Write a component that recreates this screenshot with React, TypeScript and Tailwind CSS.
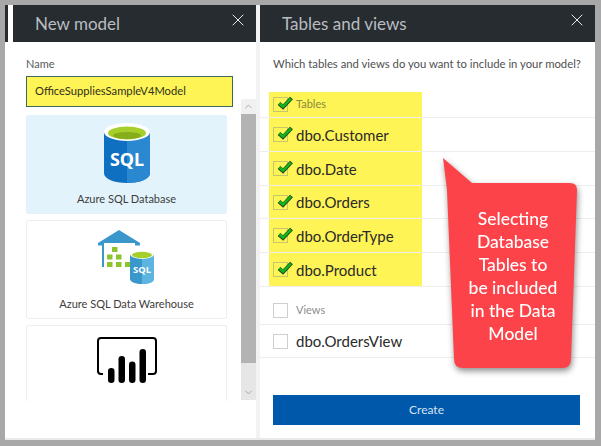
import { X, ChevronUp, ChevronDown } from "lucide-react"

const font = { fontFamily: 'Lato, "Noto Sans", sans-serif' }

function Check() {
  return (
    <svg viewBox="0 0 18 16" className="absolute left-[2px] top-[-3px] w-[18px] h-[16px]">
      <path d="M3 8.5 L7 12 L15.5 3" fill="none" stroke="#1f4a1f" strokeWidth="4" />
      <path d="M3.5 8.5 L7 11.5 L15 3.5" fill="none" stroke="#12b81c" strokeWidth="2.4" />
    </svg>
  )
}

function Box({ checked }: { checked?: boolean }) {
  return (
    <span
      className={`relative shrink-0 w-[15px] h-[15px] border ${checked ? "border-[#c9c66a]" : "border-[#cfcfcf] bg-white"}`}
    >
      {checked && <Check />}
    </span>
  )
}

function Header({ title, close }: { title: string; close: string }) {
  return (
    <div className="flex items-center justify-between h-[37px] bg-[#272c30] shrink-0">
      <span className="text-[17px] text-[#b9bdc0] pl-[22px] leading-none">{title}</span>
      <X className={`${close} w-[20px] h-[20px] text-[#e8e8e8] mb-[7px]`} strokeWidth={1.2} />
    </div>
  )
}

function Row({ label, checked, small, className }: { label: string; checked?: boolean; small?: boolean; className: string }) {
  return (
    <div className={`flex items-center pl-[13px] border-b border-[#eeeeee] ${className}`}>
      <Box checked={checked} />
      <span
        className={
          small
            ? `ml-[8px] text-[11px] ${checked ? "text-[#8a8840]" : "text-[#8d8d8d]"}`
            : "ml-[8px] pt-[1px] text-[15px] text-[#2a2a2a]"
        }
      >
        {label}
      </span>
    </div>
  )
}

function SqlDb() {
  return (
    <svg viewBox="0 0 46 60" className="w-[46px] h-[60px]">
      <path d="M0 9 V50 C0 56 10 60 23 60 C36 60 46 56 46 50 V9 Z" fill="#0f6fc0" />
      <path d="M23 18 V60 C36 60 46 56 46 50 V9 Z" fill="#2a88d0" />
      <ellipse cx="23" cy="9" rx="23" ry="9" fill="#ffffff" />
      <ellipse cx="23" cy="10" rx="19" ry="6.5" fill="#a7cf2c" />
      <ellipse cx="23" cy="12.5" rx="14" ry="3.5" fill="#86ad1a" />
      <text x="23" y="43" textAnchor="middle" fontSize="18" fontWeight="700" fill="#ffffff" fontFamily="Noto Sans, sans-serif">
        SQL
      </text>
    </svg>
  )
}

function Warehouse() {
  return (
    <svg viewBox="0 0 58 54" className="w-[58px] h-[54px]">
      <path d="M0 13 L21 0 L42 13 V15.5 H37 V13 H6 V37 H4 V15.5 H0 Z" fill="#3a97cb" />
      <g fill="#8cc52b">
        <rect x="14" y="17" width="5.5" height="5" />
        <rect x="9" y="24.5" width="5.5" height="5" />
        <rect x="18" y="24.5" width="5.5" height="5" />
        <rect x="9" y="32" width="5.5" height="5" />
        <rect x="18" y="32" width="5.5" height="5" />
        <rect x="27" y="32" width="5.5" height="5" />
      </g>
      <path d="M32 24 V49 C32 52 38 54 44 54 C50 54 56 52 56 49 V24 Z" fill="#3a97cb" />
      <path d="M44 28 V54 C50 54 56 52 56 49 V24 Z" fill="#5cb5e0" />
      <ellipse cx="44" cy="24" rx="12" ry="5" fill="#ffffff" />
      <ellipse cx="44" cy="25" rx="10" ry="3.3" fill="#a7cf2c" />
      <text x="44" y="43" textAnchor="middle" fontSize="9.5" fontWeight="700" fill="#ffffff" fontFamily="Noto Sans, sans-serif">
        SQL
      </text>
    </svg>
  )
}

function PowerBi() {
  return (
    <svg viewBox="0 0 60 46" className="w-[60px] h-[46px]">
      <path d="M6 37 H4 Q1 37 1 34 V4 Q1 1 4 1 H56 Q59 1 59 4 V34 Q59 37 56 37 H51" fill="none" stroke="#000" strokeWidth="2" />
      <rect x="11" y="31" width="6.5" height="15" rx="3.2" fill="#000" />
      <rect x="21.5" y="19" width="6.5" height="27" rx="3.2" fill="#000" />
      <rect x="32" y="24.5" width="6.5" height="21.5" rx="3.2" fill="#000" />
      <rect x="42.5" y="12" width="6.5" height="34" rx="3.2" fill="#000" />
    </svg>
  )
}

function Callout() {
  return (
    <div className="absolute left-[183px] top-[153px] w-[140px] h-[212px] drop-shadow-[1px_3px_3px_rgba(0,0,0,0.45)]">
      <svg viewBox="0 0 140 212" className="absolute inset-0 w-full h-full">
        <path
          d="M0 0 L29 25 H127 Q134 25 134 32 L128 201 Q128 210 119 210 H20 Q11 210 11 201 L4 32 Z"
          fill="#fc4349"
        />
      </svg>
      <div className="relative pt-[49px] pl-[2px] w-[138px] text-center text-white text-[17.5px] leading-[23px] font-medium">
        <div>Selecting</div>
        <div>Database</div>
        <div>Tables to</div>
        <div>be included</div>
        <div>in the Data</div>
        <div>Model</div>
      </div>
    </div>
  )
}

export default function App() {
  return (
    <div className="w-[601px] h-[446px] bg-[#a8a8a8] pt-[5px] pl-[5px] pr-[6px] pb-[6px] overflow-hidden" style={font}>
      <div className="flex h-full bg-[#e9e9e9] pb-[2px]">
        {/* panel peeking from behind */}
        <div className="w-[8px] flex flex-col shrink-0 bg-white">
          <div className="h-[37px] w-[3px] bg-[#272c30]" />
        </div>

        {/* New model */}
        <div className="w-[243px] flex flex-col bg-white shrink-0">
          <Header title="New model" close="mr-[8px]" />
          <div className="flex flex-1 min-h-0">
            <div className="w-[228px] pl-[13px] pt-[14px] flex flex-col">
              <label className="text-[11px] leading-[16px] text-[#5a5a5a]">Name</label>
              <div className="mt-[4px] w-[207px] h-[31px] flex items-center bg-[#fff455] border border-[#3b6a5c] pl-[8px] text-[11.2px] text-[#303020] whitespace-nowrap shrink-0">
                OfficeSuppliesSampleV4Model
              </div>
              <div className="mt-[8px] w-[201px] h-[286px] overflow-hidden flex flex-col gap-[6px]">
                <div className="h-[99px] shrink-0 bg-[#e3f3fc] rounded-[2px] flex flex-col items-center pt-[8px]">
                  <SqlDb />
                  <span className="mt-[8px] text-[11px] leading-[16px] text-[#3c3c3c]">Azure SQL Database</span>
                </div>
                <div className="h-[99px] shrink-0 border border-[#eeeeee] rounded-[2px] flex flex-col items-center pt-[9px]">
                  <Warehouse />
                  <span className="mt-[12px] text-[11px] leading-[16px] text-[#3c3c3c]">Azure SQL Data Warehouse</span>
                </div>
                <div className="h-[99px] shrink-0 border border-[#eeeeee] rounded-[2px] flex flex-col items-center pt-[11px]">
                  <PowerBi />
                </div>
              </div>
            </div>
            {/* scrollbar */}
            <div className="ml-[0px] mt-[57px] w-[15px] h-[301px] flex flex-col bg-[#e6e6e6]">
              <div className="h-[15px] bg-[#f0f0f0] flex items-center justify-center">
                <ChevronUp className="w-[11px] h-[11px] text-[#a8a8a8]" />
              </div>
              <div className="h-[249px] bg-[#b3b3b3]" />
              <div className="flex-1 flex items-end justify-center pb-[2px]">
                <ChevronDown className="w-[11px] h-[11px] text-[#a0a0a0]" />
              </div>
            </div>
          </div>
        </div>

        <div className="w-[4px] shrink-0 bg-[#f2f2f2]" />

        {/* Tables and views */}
        <div className="relative w-[335px] shrink-0 flex flex-col bg-white">
          <Header title="Tables and views" close="mr-[8px]" />
          <p className="mt-[13px] pl-[13px] text-[11.3px] leading-[17px] text-[#505050] whitespace-nowrap">
            Which tables and views do you want to include in your model?
          </p>
          <div className="relative mt-[20px]">
            <div className="absolute left-[9px] top-0 w-[153px] h-[195px] bg-[#fff455]" />
            <div className="relative">
              <Row label="Tables" checked small className="h-[26px]" />
              <Row label="dbo.Customer" checked className="h-[34px]" />
              <Row label="dbo.Date" checked className="h-[34px]" />
              <Row label="dbo.Orders" checked className="h-[33px]" />
              <Row label="dbo.OrderType" checked className="h-[34px]" />
              <Row label="dbo.Product" checked className="h-[34px]" />
              <Row label="Views" small className="h-[38px] pt-[9px]" />
              <Row label="dbo.OrdersView" className="h-[33px]" />
            </div>
          </div>
          <button className="mt-[37px] ml-[13px] w-[307px] h-[30px] bg-[#0058ab] text-[#d5e3f2] text-[12px]">
            Create
          </button>
          <Callout />
        </div>
      </div>
    </div>
  )
}
